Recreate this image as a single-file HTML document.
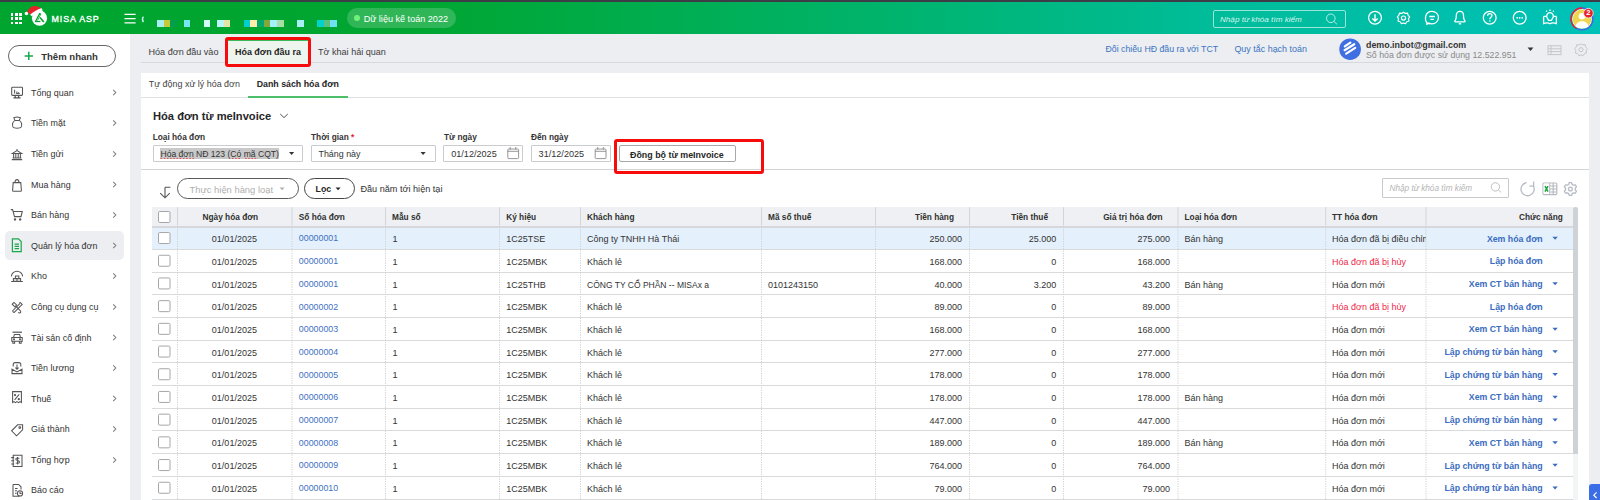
<!DOCTYPE html><html><head><meta charset="utf-8"><style>
*{box-sizing:border-box;margin:0;padding:0}
html,body{width:1600px;height:500px;overflow:hidden}
body{position:relative;background:#eceef1;font-family:"Liberation Sans",sans-serif;color:#262626;font-size:9px}
.a{position:absolute}
.t{position:absolute;white-space:nowrap;line-height:9px;height:9px}
.b{font-weight:bold}
svg{position:absolute;overflow:visible}
#hdr{left:0;top:2px;width:1600px;height:32px;background:linear-gradient(90deg,#00a52f 0px,#00a631 420px,#00b46e 900px,#00bc98 1200px,#00c1b8 1600px)}
#side{left:0;top:34px;width:130px;height:466px;background:#fff}
#panel{left:141px;top:73px;width:1448px;height:427px;background:#fff}
.hl{stroke:#fff;fill:none;stroke-width:1.3}
.si{stroke:#555;fill:none;stroke-width:1.05}
</style></head><body>
<div class="a" style="left:0;top:0;width:1600px;height:2px;background:#3e3c47"></div>
<div id="hdr" class="a"></div>
<div class="a" style="left:11.20px;top:13.30px;width:2.3px;height:2.4px;background:#fff"></div>
<div class="a" style="left:15.30px;top:13.30px;width:2.3px;height:2.4px;background:#fff"></div>
<div class="a" style="left:19.40px;top:13.30px;width:2.3px;height:2.4px;background:#fff"></div>
<div class="a" style="left:11.20px;top:17.40px;width:2.3px;height:2.4px;background:#fff"></div>
<div class="a" style="left:15.30px;top:17.40px;width:2.3px;height:2.4px;background:#fff"></div>
<div class="a" style="left:19.40px;top:17.40px;width:2.3px;height:2.4px;background:#fff"></div>
<div class="a" style="left:11.20px;top:21.50px;width:2.3px;height:2.4px;background:#fff"></div>
<div class="a" style="left:15.30px;top:21.50px;width:2.3px;height:2.4px;background:#fff"></div>
<div class="a" style="left:19.40px;top:21.50px;width:2.3px;height:2.4px;background:#fff"></div>
<svg style="left:0;top:0" width="110" height="34">
<circle cx="39.5" cy="18.2" r="7.6" fill="#fff"/>
<g stroke="#00a52f" fill="none" stroke-linecap="butt">
<path d="M35.4 21.8 L39.6 13.6 L41 14.4" stroke-width="1.3"/>
<path d="M35.2 21.5 H40.4" stroke-width="1.3"/>
<path d="M37.6 20.4 L40.6 14.6" stroke-width="0.8"/>
<path d="M40 17.4 L43.8 21.9" stroke-width="1.6"/>
</g>
<path d="M26.8 12.4 C28.5 8.2 31.5 6 34.4 5.9 C37.4 5.8 39.8 7 41.4 8.6 L31 15 C30 13.2 28.6 12.4 26.8 12.4Z" fill="#e8232a"/>
<path d="M30.2 14.4 C33.6 11.6 37.6 9.2 41.2 8.2 C42 8.6 42.6 9.4 42.6 10.4 C38.8 11.6 35 13.6 31.8 16.2 C31.2 15.8 30.6 15.2 30.2 14.4Z" fill="#fff"/>
<circle cx="26.4" cy="13.6" r="1.75" fill="#fff"/>
</svg>
<div class="t" style="left:51.6px;top:14.6px;color:#fff;font-size:8.9px;line-height:9px;letter-spacing:0.88px;-webkit-text-stroke:0.35px #fff">MISA ASP</div>
<svg style="left:0;top:0" width="150" height="34"><path d="M124.5 14.4H135.6M124.5 18.7H135.6M124.5 22.9H135.6" stroke="#fff" stroke-width="1.2"/><path d="M143.4 16.6 Q141.4 19.4 143.4 22.2" stroke="#c8f4f0" stroke-width="1.3" fill="none"/></svg>
<div class="a" style="left:157.00px;top:20px;width:6.67px;height:6.67px;background:#a8eef0"></div><div class="a" style="left:163.67px;top:20px;width:6.67px;height:6.67px;background:#c6ca3a"></div><div class="a" style="left:170.33px;top:20px;width:6.67px;height:6.67px;background:#00a04a"></div><div class="a" style="left:183.67px;top:20px;width:6.67px;height:6.67px;background:#76e6f0"></div><div class="a" style="left:203.67px;top:20px;width:6.67px;height:6.67px;background:#d2fcf6"></div><div class="a" style="left:217.00px;top:20px;width:6.67px;height:6.67px;background:#b8f6f8"></div><div class="a" style="left:223.67px;top:20px;width:6.67px;height:6.67px;background:#e6e4a4"></div><div class="a" style="left:243.67px;top:20px;width:6.67px;height:6.67px;background:#00cfcf"></div><div class="a" style="left:250.33px;top:20px;width:6.67px;height:6.67px;background:#ffeca8"></div><div class="a" style="left:257.00px;top:20px;width:6.67px;height:6.67px;background:#00a86e"></div><div class="a" style="left:263.67px;top:20px;width:6.67px;height:6.67px;background:#80a83a"></div><div class="a" style="left:270.33px;top:20px;width:6.67px;height:6.67px;background:#a6f0fc"></div><div class="a" style="left:277.00px;top:20px;width:6.67px;height:6.67px;background:#a8dea8"></div><div class="a" style="left:297.00px;top:20px;width:6.67px;height:6.67px;background:#a6f0f6"></div><div class="a" style="left:317.00px;top:20px;width:6.67px;height:6.67px;background:#00d2cc"></div><div class="a" style="left:323.67px;top:20px;width:6.67px;height:6.67px;background:#5cc07c"></div><div class="a" style="left:330.33px;top:20px;width:6.67px;height:6.67px;background:#6ee2f0"></div>
<div class="a" style="left:346.8px;top:8.1px;width:108.8px;height:20.3px;border-radius:10.2px;background:rgba(255,255,255,0.19)"></div>
<div class="a" style="left:353.8px;top:15.3px;width:6px;height:6px;border-radius:50%;background:#72f07a"></div>
<div class="t" style="left:363.7px;top:14.6px;color:#fff;font-size:9.08px">Dữ liệu kế toán 2022</div>
<div class="a" style="left:1212.5px;top:10.1px;width:133px;height:17.5px;border:1px solid rgba(255,255,255,0.6);border-radius:2px"></div>
<div class="t" style="left:1220px;top:14.5px;color:rgba(255,255,255,0.85);font-size:8.12px;font-style:italic">Nhập từ khóa tìm kiếm</div>
<svg style="left:0;top:0" width="1600" height="34"><circle cx="1330.8" cy="18.3" r="4.3" stroke="rgba(255,255,255,0.7)" stroke-width="1" fill="none"/><path d="M1334 21.5 L1337 24.3" stroke="rgba(255,255,255,0.7)" stroke-width="1"/></svg>
<svg style="left:0;top:0" width="1600" height="34">
<g class="hl">
<circle cx="1375" cy="17.8" r="6.4"/>
<path d="M1375 14.2V21 M1372.3 18.4L1375 21L1377.7 18.4" stroke-width="1.4"/>
<g transform="translate(1403.5 18.1) scale(0.9) translate(-1403.5 -17.8)"><path d="M1403.5 11.4 L1405.5 12.6 L1408 12.2 L1408.6 14.6 L1410.3 16.4 L1409 18.6 L1409.6 21 L1407.2 21.8 L1405.8 24 L1403.5 23.2 L1401.2 24 L1399.8 21.8 L1397.4 21 L1398 18.6 L1396.7 16.4 L1398.4 14.6 L1399 12.2 L1401.5 12.6Z" stroke-linejoin="round"/>
<circle cx="1403.5" cy="17.8" r="2.3"/></g>
<path d="M1428.2 23.8 C1425 22.6 1425.4 17.8 1425.6 16.8 C1426.4 12.6 1429.6 11.4 1432 11.4 C1435.6 11.4 1438.5 14 1438.5 17.6 C1438.5 21.4 1435.3 23.8 1432 23.8 C1430.8 23.8 1429.6 23.6 1428.6 23.1 L1426.2 24.4 Z"/>
<path d="M1429.3 16.5H1434.9 M1430.4 19.3H1433.8"/>
<path d="M1455.2 20.4 C1456.3 19.3 1456.3 17.6 1456.3 15.4 C1456.3 12.8 1457.9 11.3 1459.9 11.3 C1461.9 11.3 1463.5 12.8 1463.5 15.4 C1463.5 17.6 1463.5 19.3 1464.6 20.4 C1465.4 21.2 1465 21.8 1464.2 21.8 H1455.6 C1454.8 21.8 1454.4 21.2 1455.2 20.4Z M1458.8 23.4 Q1459.9 24.4 1461 23.4"/>
<circle cx="1489.7" cy="17.8" r="6.4"/>
<path d="M1487.6 15.8 C1487.6 14.4 1488.6 13.6 1489.8 13.6 C1491.1 13.6 1492 14.5 1492 15.6 C1492 17.2 1489.8 17.4 1489.8 19.2" />
<circle cx="1519.7" cy="17.8" r="6.4"/>
<path d="M1543.6 16.4 V23.6 C1546.4 22.6 1548.2 22.6 1550 23.8 C1551.8 22.6 1553.6 22.6 1556.4 23.6 V16.4 M1543.6 16.4H1546.2 M1553.8 16.4H1556.4"/>
<path d="M1547.6 18.6 C1546.4 17.2 1546.4 14.6 1547.8 13.6 C1549 12.6 1551 12.6 1552.2 13.6 C1553.6 14.6 1553.6 17.2 1552.4 18.6 L1551.4 20.4 H1548.6Z"/>
<path d="M1550 9.6V11 M1546.2 10.8L1547 11.6 M1553.8 10.8L1553 11.6"/>
</g>
<circle cx="1489.9" cy="21" r="0.8" fill="#fff"/>
<circle cx="1517.2" cy="17.8" r="0.9" fill="#fff"/><circle cx="1519.7" cy="17.8" r="0.9" fill="#fff"/><circle cx="1522.2" cy="17.8" r="0.9" fill="#fff"/>
</svg>
<svg style="left:0;top:0" width="1600" height="34">
<circle cx="1582" cy="18.9" r="10.9" fill="none" stroke="#4a5cf0" stroke-width="1.3"/>
<circle cx="1582" cy="18.9" r="10.9" fill="none" stroke="#e8202a" stroke-width="1.4" stroke-dasharray="0 22.8 28.5 100"/>
<circle cx="1582" cy="18.9" r="9.9" fill="#fff"/>
<circle cx="1582" cy="18.9" r="9.3" fill="#f0d64c"/>
<circle cx="1582" cy="16.3" r="3.3" fill="#fff"/>
<path d="M1575.6 26.6 C1576.2 22.6 1578.8 21.2 1582 21.2 C1585.2 21.2 1587.8 22.6 1588.4 26.6 C1586.4 28.6 1577.6 28.6 1575.6 26.6Z" fill="#fff"/>
<circle cx="1588.4" cy="13.2" r="4.8" fill="#e8202a" stroke="#fff" stroke-width="0.7"/>
</svg>
<div class="t b" style="left:1586.3px;top:9.4px;color:#fff;font-size:7.6px;line-height:8px">2</div>
<div id="side" class="a"></div>
<div class="a" style="left:8.4px;top:45px;width:107.5px;height:22px;border:1px solid #666;border-radius:11px"></div>
<svg style="left:0;top:0" width="130" height="80"><path d="M28.8 51.7V60.1M24.6 55.9H33" stroke="#1aa84a" stroke-width="1.5"/></svg>
<div class="t b" style="left:41.2px;top:51.6px;font-size:9.55px;color:#333">Thêm nhanh</div>
<div class="a" style="left:5px;top:231px;width:119px;height:28.5px;border-radius:5px;background:#eceef1"></div>
<div class="t" style="left:31px;top:88.9px;font-size:8.94px;color:#333">Tổng quan</div>
<svg style="left:0;top:0" width="130" height="500"><path d="M113.2 89.9L115.8 92.5L113.2 95.1" stroke="#7a7a7a" stroke-width="1.05" fill="none"/></svg>
<div class="t" style="left:31px;top:119.4px;font-size:8.94px;color:#333">Tiền mặt</div>
<svg style="left:0;top:0" width="130" height="500"><path d="M113.2 120.4L115.8 123.0L113.2 125.6" stroke="#7a7a7a" stroke-width="1.05" fill="none"/></svg>
<div class="t" style="left:31px;top:150.4px;font-size:8.94px;color:#333">Tiền gửi</div>
<svg style="left:0;top:0" width="130" height="500"><path d="M113.2 151.4L115.8 154.0L113.2 156.6" stroke="#7a7a7a" stroke-width="1.05" fill="none"/></svg>
<div class="t" style="left:31px;top:180.9px;font-size:8.94px;color:#333">Mua hàng</div>
<svg style="left:0;top:0" width="130" height="500"><path d="M113.2 181.9L115.8 184.5L113.2 187.1" stroke="#7a7a7a" stroke-width="1.05" fill="none"/></svg>
<div class="t" style="left:31px;top:211.4px;font-size:8.94px;color:#333">Bán hàng</div>
<svg style="left:0;top:0" width="130" height="500"><path d="M113.2 212.4L115.8 215.0L113.2 217.6" stroke="#7a7a7a" stroke-width="1.05" fill="none"/></svg>
<div class="t" style="left:31px;top:241.9px;font-size:8.94px;color:#333">Quản lý hóa đơn</div>
<svg style="left:0;top:0" width="130" height="500"><path d="M113.2 242.9L115.8 245.5L113.2 248.1" stroke="#7a7a7a" stroke-width="1.05" fill="none"/></svg>
<div class="t" style="left:31px;top:272.4px;font-size:8.94px;color:#333">Kho</div>
<svg style="left:0;top:0" width="130" height="500"><path d="M113.2 273.4L115.8 276.0L113.2 278.6" stroke="#7a7a7a" stroke-width="1.05" fill="none"/></svg>
<div class="t" style="left:31px;top:303.4px;font-size:8.94px;color:#333">Công cụ dụng cụ</div>
<svg style="left:0;top:0" width="130" height="500"><path d="M113.2 304.4L115.8 307.0L113.2 309.6" stroke="#7a7a7a" stroke-width="1.05" fill="none"/></svg>
<div class="t" style="left:31px;top:333.9px;font-size:8.94px;color:#333">Tài sản cố định</div>
<svg style="left:0;top:0" width="130" height="500"><path d="M113.2 334.9L115.8 337.5L113.2 340.1" stroke="#7a7a7a" stroke-width="1.05" fill="none"/></svg>
<div class="t" style="left:31px;top:364.4px;font-size:8.94px;color:#333">Tiền lương</div>
<svg style="left:0;top:0" width="130" height="500"><path d="M113.2 365.4L115.8 368.0L113.2 370.6" stroke="#7a7a7a" stroke-width="1.05" fill="none"/></svg>
<div class="t" style="left:31px;top:394.9px;font-size:8.94px;color:#333">Thuế</div>
<svg style="left:0;top:0" width="130" height="500"><path d="M113.2 395.9L115.8 398.5L113.2 401.1" stroke="#7a7a7a" stroke-width="1.05" fill="none"/></svg>
<div class="t" style="left:31px;top:425.4px;font-size:8.94px;color:#333">Giá thành</div>
<svg style="left:0;top:0" width="130" height="500"><path d="M113.2 426.4L115.8 429.0L113.2 431.6" stroke="#7a7a7a" stroke-width="1.05" fill="none"/></svg>
<div class="t" style="left:31px;top:456.4px;font-size:8.94px;color:#333">Tổng hợp</div>
<svg style="left:0;top:0" width="130" height="500"><path d="M113.2 457.4L115.8 460.0L113.2 462.6" stroke="#7a7a7a" stroke-width="1.05" fill="none"/></svg>
<div class="t" style="left:31px;top:486.4px;font-size:8.94px;color:#333">Báo cáo</div>
<svg style="left:0;top:0" width="130" height="500"><g class="si">
<rect x="11.7" y="87.2" width="10.8" height="8.2" rx="0.8"/>
<path d="M14.6 89.8V93.4 M16.8 91.6V93.4 M18.6 92.2V93.4 M16.2 93.4H19.6"/>
<path d="M15.2 95.4V97.6 M18.6 95.4V97.6 M13.4 97.9H20.6" stroke-width="1.3"/>
<path d="M13.8 117.8 C15.5 117 18.5 117 20.4 117.8 L19.2 120.4 C21.8 121.8 22.2 125 21.2 127 C20.2 128.6 14 128.6 13 127 C12 125 12.4 121.8 15 120.4Z M15 120.4H19.2"/>
<path d="M11.8 159.6H22.2 M12.6 158H21.4 M13.6 158V153.6 M15.8 158V153.6 M18.2 158V153.6 M20.4 158V153.6 M12.4 153.4H21.6 L17 150.6Z M17 149V150.4"/>
<path d="M12.6 190.4 L13.2 182.6 H20.8 L21.4 190.4 C21.4 191 21 191.2 20.6 191.2 H13.4 C13 191.2 12.6 191 12.6 190.4Z M15 182.6 C15 178.6 19 178.6 19 182.6"/>
<path d="M10.8 209.6 H12.6 L14.5 216.6 H21 L22.3 211.4 H13.5"/>
<circle cx="15" cy="219.4" r="0.7"/><circle cx="20.2" cy="219.4" r="0.7"/>
</g>
<g stroke="#1aa84a" fill="none" stroke-width="1.2">
<path d="M12.4 238.8 H18.4 L21.2 241.6 V251.6 H12.4Z M14.6 244.2 H19 M14.6 246.4 H19 M14.6 248.6 H19"/>
</g>
<g class="si">
<path d="M11.4 276.4 C11.6 273.4 14.2 271.2 17 271.2 C19.8 271.2 22.4 273.4 22.6 276.4"/>
<path d="M15.4 276 H18.8 V278.6 H15.4Z M13.4 278.6 H17 V281.2 H13.4Z M17 278.6 H20.6 V281.2 H17Z M11.2 281.5 H22.8" />
<path d="M12.4 311 L19.6 303.8 M14 312.6 L21.2 305.4 M12.4 311 L14 312.6 M19.2 303.4 L20.2 302.4 L22.2 304.4 L21.2 305.4"/>
<path d="M12.2 304.2 L14 302.4 L16.6 305 L14.8 306.8Z M15.6 306 L20 310.4 C21 311.4 21 312.4 20.2 312.8 C19.4 313.2 18.6 312.8 18.2 312.2"/>
<path d="M12.5 332.2 H22" stroke-width="1.2"/>
<path d="M13.6 337.4 L14.4 334.4 H19.6 L20.4 337.4 M11.8 337.4 H22.2 V341.2 H11.8Z M12.8 341.2 V343.2 H14.6 V341.2 M19.4 341.2 V343.2 H21.2 V341.2"/>
<circle cx="14" cy="339.3" r="0.5"/><circle cx="20" cy="339.3" r="0.5"/>
<path d="M13.2 366.6 V364.6 C13.2 363.4 14 362.6 15.2 362.6 H18.8 C20 362.6 20.8 363.4 20.8 364.6 V366.6 M17 364.6 V369.2 M15.4 367.6 L17 369.2 L18.6 367.6"/>
<path d="M12 369.2 V373.6 H22 V369.2 L17 372 Z"/>
<path d="M12.6 391.6 H21.4 V402.6 L20 401.6 L18.6 402.6 L17 401.6 L15.4 402.6 L14 401.6 L12.6 402.6Z M14.6 399.8 L19.2 394.4"/>
<circle cx="15" cy="395" r="0.6"/><circle cx="18.8" cy="399.2" r="0.6"/>
<path d="M17.6 424.8 L22.6 424.8 L22.6 429.8 L16.6 435.8 L11.6 430.8 Z"/>
<circle cx="19.8" cy="427.6" r="0.9"/>
<path d="M13.2 455.2 H22 V466.4 H13.2Z M11.2 457.6 H14.2 M11.2 460.8 H14.2 M11.2 464 H14.2 M17.6 457 V464.6 M19.4 458.4 C18.8 457.7 15.8 457.6 15.8 459.2 C15.8 460.9 19.5 460.1 19.5 462 C19.5 463.6 16.2 463.4 15.8 462.7"/>
<path d="M13 484.4 H18.6 L21 486.8 V489.4 M19.4 496.2 H13 V484.4 M15 488.4 H17.6 M15 490.8 H17 M15 493.2 H16.6"/>
<circle cx="20" cy="493.4" r="2.6"/>
<path d="M20 491.6 V493.4 H21.6"/>
</g></svg>
<div class="a" style="left:141px;top:62px;width:1459px;height:1px;background:#d6d8db"></div>
<div class="a" style="left:225px;top:36.8px;width:86.4px;height:30.4px;border:3.4px solid #f70c0c;border-radius:3px;background:#eef5ee"></div><div class="a" style="left:228.4px;top:40.2px;width:79.6px;height:1px;background:#3cb85a"></div>
<div class="t" style="left:148.5px;top:47.6px;color:#3c3c3c;font-size:9.07px">Hóa đơn đầu vào</div>
<div class="t b" style="left:235px;top:47.6px;color:#1f1f1f;font-size:8.95px">Hóa đơn đầu ra</div>
<div class="t" style="left:318px;top:47.6px;color:#3c3c3c;font-size:9.07px">Tờ khai hải quan</div>
<div class="t" style="left:1105.5px;top:45.3px;color:#3a74c2;font-size:8.75px">Đối chiếu HĐ đầu ra với TCT</div>
<div class="t" style="left:1234.4px;top:45.3px;color:#3a74c2;font-size:8.95px">Quy tắc hạch toán</div>
<svg style="left:0;top:0" width="1600" height="80">
<circle cx="1350.1" cy="49.2" r="10.8" fill="#3f6fe0"/>
<path d="M1344.8 46.4 L1350.4 42.6 M1344.6 50.2 L1354.2 44.2 M1346.2 53.6 L1355.2 47.8" stroke="#fff" stroke-width="2.2" stroke-linecap="round"/>
<path d="M1527.6 47.6 H1533.4 L1530.5 51Z" fill="#333"/>
<g stroke="#c4c6ca" fill="none" stroke-width="1">
<rect x="1548" y="45.8" width="13" height="8.8"/>
<path d="M1548 48.8H1561 M1548 51.6H1561 M1551 45.8V54.6"/>
<g transform="translate(0,1.4)"><path d="M1581 42.4 L1582.9 43.6 L1585.2 43.2 L1585.7 45.5 L1587.3 47.2 L1586.1 49.2 L1586.7 51.5 L1584.4 52.2 L1583.1 54.3 L1581 53.5 L1578.9 54.3 L1577.6 52.2 L1575.3 51.5 L1575.9 49.2 L1574.7 47.2 L1576.3 45.5 L1576.8 43.2 L1579.1 43.6Z"/>
<circle cx="1581" cy="48.3" r="2.1"/>
</g></g></svg>
<div class="t b" style="left:1366px;top:40.6px;color:#333;font-size:8.87px">demo.inbot@gmail.com</div>
<div class="t" style="left:1366px;top:50.7px;color:#8a8a8a;font-size:8.8px">Số hóa đơn được sử dụng 12.522.951</div>
<div id="panel" class="a"></div>
<div class="a" style="left:141px;top:96.5px;width:1448px;height:1px;background:#e0e2e5"></div>
<div class="a" style="left:248px;top:95.6px;width:99.5px;height:2px;background:#4cbf6a"></div>
<div class="t" style="left:148.7px;top:80.3px;color:#444;font-size:8.93px">Tự động xử lý hóa đơn</div>
<div class="t b" style="left:256.7px;top:80.3px;color:#262626;font-size:8.82px">Danh sách hóa đơn</div>
<div class="t b" style="left:153px;top:111.3px;color:#262626;font-size:11.15px;line-height:11px;height:11px">Hóa đơn từ meInvoice</div>
<svg style="left:0;top:0" width="400" height="140"><path d="M280.2 114 L284 117.6 L287.8 114" stroke="#555" stroke-width="1" fill="none"/></svg>
<div class="t b" style="left:152.7px;top:132.6px;color:#333;font-size:8.3px">Loại hóa đơn</div>
<div class="t b" style="left:311px;top:132.6px;color:#333;font-size:8.3px">Thời gian <span style="color:#e8202a">*</span></div>
<div class="t b" style="left:444px;top:132.6px;color:#333;font-size:8.3px">Từ ngày</div>
<div class="t b" style="left:531px;top:132.6px;color:#333;font-size:8.3px">Đến ngày</div>
<div class="a" style="left:152.5px;top:145.2px;width:150px;height:16.8px;border:1px solid #c9cbcf;border-radius:1px;background:#fff;"></div>
<div class="a" style="left:311px;top:145.2px;width:124.8px;height:16.8px;border:1px solid #c9cbcf;border-radius:1px;background:#fff;"></div>
<div class="a" style="left:443.3px;top:145.2px;width:79.7px;height:16.8px;border:1px solid #c9cbcf;border-radius:1px;background:#fff;"></div>
<div class="a" style="left:531px;top:145.2px;width:79.8px;height:16.8px;border:1px solid #c9cbcf;border-radius:1px;background:#fff;"></div>
<div class="a" style="left:160px;top:147.5px;width:119px;height:11.5px;background:#c9c9c9"></div>
<div class="t" style="left:160.5px;top:149.6px;color:#333;font-size:8.57px">Hóa đơn NĐ 123 (Có mã CQT)</div>
<div class="t" style="left:318.5px;top:149.8px;color:#333;font-size:8.89px">Tháng này</div>
<div class="t" style="left:451.2px;top:149.8px;color:#333;font-size:9.1px">01/12/2025</div>
<div class="t" style="left:538.6px;top:149.8px;color:#333;font-size:9.1px">31/12/2025</div>
<svg style="left:0;top:0" width="800" height="200"><path d="M289 152H294.2L291.6 155Z" fill="#333"/><path d="M420.5 152H425.7L423.1 155Z" fill="#333"/><path d="M160.5 158.4 H195.5 M232 158.4 H240.5 M245 158.4 H258" stroke="#e64040" stroke-width="0.9" stroke-dasharray="1.6 1.6"/></svg>
<svg style="left:0;top:0" width="800" height="200"><g stroke="#8a8a8a" fill="none" stroke-width="0.9">
<rect x="507.8" y="149" width="10.8" height="9.6" rx="1"/><path d="M507.5 151.3H518.5 M510.2 147V149.6 M515.8 147V149.6"/>
<rect x="595.2" y="149" width="10.8" height="9.6" rx="1"/><path d="M595 151.3H606 M597.7 147V149.6 M603.3 147V149.6"/>
</g></svg>
<div class="a" style="left:618.8px;top:145.2px;width:116.8px;height:17px;border:1px solid #a6a8ab;border-radius:2px;background:#fff"></div>
<div class="t b" style="left:630px;top:151px;color:#262626;font-size:8.9px">Đồng bộ từ meInvoice</div>
<div class="a" style="left:141px;top:168.6px;width:1448px;height:1px;background:#d2d4d7"></div>
<div class="a" style="left:614.3px;top:139.4px;width:149.7px;height:34.3px;border:3.6px solid #f70c0c;border-radius:3px"></div>
<svg style="left:0;top:0" width="800" height="210"><g stroke="#555" fill="none" stroke-width="1.1">
<path d="M165 187.3 V197.6 M160.2 193.2 L165 197.8 L169.8 193.2 M165 187.3 H170.4"/>
</g></svg>
<div class="a" style="left:177.4px;top:178.4px;width:121.6px;height:20.3px;border:1px solid #5a5a5a;border-radius:10.5px"></div>
<div class="t" style="left:189.6px;top:184.5px;color:#b0b0b0;font-size:9.4px">Thực hiện hàng loạt</div>
<svg style="left:0;top:0" width="800" height="210"><path d="M279.6 187.4H284.6L282.1 190.2Z" fill="#b0b0b0"/><path d="M335.6 187.4H340.6L338.1 190.2Z" fill="#262626"/></svg>
<div class="a" style="left:304px;top:178.4px;width:50.6px;height:20.3px;border:1px solid #444;border-radius:10.5px"></div>
<div class="t b" style="left:315.6px;top:185px;color:#262626;font-size:8.8px">Lọc</div>
<div class="t" style="left:360.4px;top:185px;color:#333;font-size:9.15px">Đầu năm tới hiện tại</div>
<div class="a" style="left:1382.2px;top:178.3px;width:126.4px;height:20.2px;border:1px solid #c8cacd;border-radius:1px"></div>
<div class="t" style="left:1389.6px;top:184.2px;color:#b4b4b4;font-size:8.2px;font-style:italic">Nhập từ khóa tìm kiếm</div>
<svg style="left:0;top:0" width="1600" height="210"><g stroke="#b8b8b8" fill="none" stroke-width="0.9">
<circle cx="1495.4" cy="186.9" r="4.2"/><path d="M1498.4 189.9 L1501 192.4"/>
</g>
<g stroke="#b6bac2" fill="none" stroke-width="1.3">
<path d="M1526.6 182.6 A6.6 6.6 0 1 0 1533.4 186"/>
<path d="M1533.6 181.6 V186.2 H1529.4"/>
<path d="M1569.18 182.72 L1571.62 182.72 L1572.16 184.43 L1573.48 185.19 L1575.23 184.80 L1576.45 186.92 L1575.24 188.23 L1575.24 189.77 L1576.45 191.08 L1575.23 193.20 L1573.48 192.81 L1572.16 193.57 L1571.62 195.28 L1569.18 195.28 L1568.64 193.57 L1567.32 192.81 L1565.57 193.20 L1564.35 191.08 L1565.56 189.77 L1565.56 188.23 L1564.35 186.92 L1565.57 184.80 L1567.32 185.19 L1568.64 184.43 Z" stroke-linejoin="round"/>
<circle cx="1570.4" cy="189" r="1.9"/>
</g>
<g fill="none" stroke="#b6bac2" stroke-width="1.2">
<rect x="1543" y="183" width="13.8" height="11.6" rx="1"/>
<path d="M1549.6 186 H1556.8 M1549.6 189 H1556.8 M1549.6 192 H1556.8 M1553.2 183 V194.6 M1549.6 183 V194.6"/>
</g>
<rect x="1543.6" y="183.6" width="5.6" height="10.4" fill="#fff"/>
<path d="M1545 186.2 L1548 191.6 M1548 186.2 L1545 191.6" stroke="#18a83a" stroke-width="1.5"/>
</svg>
<div class="a" style="left:152px;top:207.2px;width:1421.2px;height:19.400000000000006px;background:#eef0f3"></div>
<div class="a" style="left:152px;top:225.6px;width:1421.2px;height:2px;background:#d6d8dc"></div>
<div class="a" style="left:152px;top:227.6px;width:1421.2px;height:21.4px;background:#e4f0fc"></div>
<div class="a" style="left:152px;top:249px;width:1421.2px;height:1px;background:#d9dadc"></div>
<div class="a" style="left:152px;top:272px;width:1421.2px;height:1px;background:#d9dadc"></div>
<div class="a" style="left:152px;top:294px;width:1421.2px;height:1px;background:#d9dadc"></div>
<div class="a" style="left:152px;top:317px;width:1421.2px;height:1px;background:#d9dadc"></div>
<div class="a" style="left:152px;top:340px;width:1421.2px;height:1px;background:#d9dadc"></div>
<div class="a" style="left:152px;top:362px;width:1421.2px;height:1px;background:#d9dadc"></div>
<div class="a" style="left:152px;top:385px;width:1421.2px;height:1px;background:#d9dadc"></div>
<div class="a" style="left:152px;top:408px;width:1421.2px;height:1px;background:#d9dadc"></div>
<div class="a" style="left:152px;top:430px;width:1421.2px;height:1px;background:#d9dadc"></div>
<div class="a" style="left:152px;top:453px;width:1421.2px;height:1px;background:#d9dadc"></div>
<div class="a" style="left:152px;top:476px;width:1421.2px;height:1px;background:#d9dadc"></div>
<div class="a" style="left:152px;top:499px;width:1421.2px;height:1px;background:#d9dadc"></div>
<svg style="left:0;top:0" width="1600" height="500"><path d="M177.5 207.2V225.6" stroke="#d2d4d8" stroke-width="1"/><path d="M292 207.2V225.6" stroke="#d2d4d8" stroke-width="1"/><path d="M385.5 207.2V225.6" stroke="#d2d4d8" stroke-width="1"/><path d="M499.5 207.2V225.6" stroke="#d2d4d8" stroke-width="1"/><path d="M580.5 207.2V225.6" stroke="#d2d4d8" stroke-width="1"/><path d="M761.5 207.2V225.6" stroke="#d2d4d8" stroke-width="1"/><path d="M875.5 207.2V225.6" stroke="#d2d4d8" stroke-width="1"/><path d="M969.5 207.2V225.6" stroke="#d2d4d8" stroke-width="1"/><path d="M1063.5 207.2V225.6" stroke="#d2d4d8" stroke-width="1"/><path d="M1178 207.2V225.6" stroke="#d2d4d8" stroke-width="1"/><path d="M1325.7 207.2V225.6" stroke="#d2d4d8" stroke-width="1"/><path d="M1426 207.2V225.6" stroke="#d2d4d8" stroke-width="1"/><path d="M177.5 226.6V500" stroke="#d0d0d0" stroke-width="1" stroke-dasharray="1.2 1.2"/><path d="M292 226.6V500" stroke="#d0d0d0" stroke-width="1" stroke-dasharray="1.2 1.2"/><path d="M385.5 226.6V500" stroke="#d0d0d0" stroke-width="1" stroke-dasharray="1.2 1.2"/><path d="M499.5 226.6V500" stroke="#d0d0d0" stroke-width="1" stroke-dasharray="1.2 1.2"/><path d="M580.5 226.6V500" stroke="#d0d0d0" stroke-width="1" stroke-dasharray="1.2 1.2"/><path d="M761.5 226.6V500" stroke="#d0d0d0" stroke-width="1" stroke-dasharray="1.2 1.2"/><path d="M875.5 226.6V500" stroke="#d0d0d0" stroke-width="1" stroke-dasharray="1.2 1.2"/><path d="M969.5 226.6V500" stroke="#d0d0d0" stroke-width="1" stroke-dasharray="1.2 1.2"/><path d="M1063.5 226.6V500" stroke="#d0d0d0" stroke-width="1" stroke-dasharray="1.2 1.2"/><path d="M1178 226.6V500" stroke="#d0d0d0" stroke-width="1" stroke-dasharray="1.2 1.2"/><path d="M1325.7 226.6V500" stroke="#d0d0d0" stroke-width="1" stroke-dasharray="1.2 1.2"/><path d="M1426 226.6V500" stroke="#d0d0d0" stroke-width="1" stroke-dasharray="1.2 1.2"/><rect x="158.5" y="211.50" width="11.5" height="11" rx="1.2" fill="#fff" stroke="#a4a6a8" stroke-width="1"/><rect x="158.5" y="232.55" width="11.5" height="11" rx="1.2" fill="#fff" stroke="#a4a6a8" stroke-width="1"/><rect x="158.5" y="255.25" width="11.5" height="11" rx="1.2" fill="#fff" stroke="#a4a6a8" stroke-width="1"/><rect x="158.5" y="277.95" width="11.5" height="11" rx="1.2" fill="#fff" stroke="#a4a6a8" stroke-width="1"/><rect x="158.5" y="300.65" width="11.5" height="11" rx="1.2" fill="#fff" stroke="#a4a6a8" stroke-width="1"/><rect x="158.5" y="323.35" width="11.5" height="11" rx="1.2" fill="#fff" stroke="#a4a6a8" stroke-width="1"/><rect x="158.5" y="346.05" width="11.5" height="11" rx="1.2" fill="#fff" stroke="#a4a6a8" stroke-width="1"/><rect x="158.5" y="368.75" width="11.5" height="11" rx="1.2" fill="#fff" stroke="#a4a6a8" stroke-width="1"/><rect x="158.5" y="391.45" width="11.5" height="11" rx="1.2" fill="#fff" stroke="#a4a6a8" stroke-width="1"/><rect x="158.5" y="414.15" width="11.5" height="11" rx="1.2" fill="#fff" stroke="#a4a6a8" stroke-width="1"/><rect x="158.5" y="436.85" width="11.5" height="11" rx="1.2" fill="#fff" stroke="#a4a6a8" stroke-width="1"/><rect x="158.5" y="459.55" width="11.5" height="11" rx="1.2" fill="#fff" stroke="#a4a6a8" stroke-width="1"/><rect x="158.5" y="482.25" width="11.5" height="11" rx="1.2" fill="#fff" stroke="#a4a6a8" stroke-width="1"/></svg>
<div class="t" style="left:202.5px;top:212.60px;font-weight:bold;font-size:8.3px;color:#303030">Ngày hóa đơn</div>
<div class="t" style="left:298.8px;top:212.60px;font-weight:bold;font-size:8.3px;color:#303030">Số hóa đơn</div>
<div class="t" style="left:392.0px;top:212.60px;font-weight:bold;font-size:8.3px;color:#303030">Mẫu số</div>
<div class="t" style="left:506.2px;top:212.60px;font-weight:bold;font-size:8.3px;color:#303030">Ký hiệu</div>
<div class="t" style="left:587.0px;top:212.60px;font-weight:bold;font-size:8.3px;color:#303030">Khách hàng</div>
<div class="t" style="left:768.0px;top:212.60px;font-weight:bold;font-size:8.3px;color:#303030">Mã số thuế</div>
<div class="t" style="right:646.0px;top:212.60px;font-weight:bold;font-size:8.3px;color:#303030">Tiền hàng</div>
<div class="t" style="right:552.0px;top:212.60px;font-weight:bold;font-size:8.3px;color:#303030">Tiền thuế</div>
<div class="t" style="right:437.5px;top:212.60px;font-weight:bold;font-size:8.3px;color:#303030">Giá trị hóa đơn</div>
<div class="t" style="left:1184.5px;top:212.60px;font-weight:bold;font-size:8.3px;color:#303030">Loại hóa đơn</div>
<div class="t" style="left:1332.0px;top:212.60px;font-weight:bold;font-size:8.3px;color:#303030">TT hóa đơn</div>
<div class="t" style="right:37.2px;top:212.60px;font-weight:bold;font-size:8.3px;color:#303030">Chức năng</div>
<div class="t" style="left:134.4px;width:200px;text-align:center;top:235.15px;font-size:9px;color:#333">01/01/2025</div>
<div class="t" style="left:298.8px;top:234.45px;font-size:8.85px;color:#3f72c2">00000001</div>
<div class="t" style="left:392.5px;top:235.15px;font-size:9px;color:#333">1</div>
<div class="t" style="left:506.2px;top:235.15px;font-size:9px;color:#333">1C25TSE</div>
<div class="t" style="left:587.0px;top:235.15px;font-size:9px;color:#333">Công ty TNHH Hà Thái</div>
<div class="t" style="right:638.0px;top:235.15px;font-size:9px;color:#333">250.000</div>
<div class="t" style="right:543.7px;top:235.15px;font-size:9px;color:#333">25.000</div>
<div class="t" style="right:430.0px;top:235.15px;font-size:9px;color:#333">275.000</div>
<div class="t" style="left:1184.5px;top:235.15px;font-size:9px;color:#333">Bán hàng</div>
<div class="t" style="left:1332px;top:235.15px;width:93.5px;overflow:hidden;font-size:9px;color:#333">Hóa đơn đã bị điều chỉnh</div>
<div class="t" style="right:57.3px;top:234.55px;font-weight:bold;font-size:8.75px;color:#3a6cc0">Xem hóa đơn</div>
<div class="t" style="left:134.4px;width:200px;text-align:center;top:257.85px;font-size:9px;color:#333">01/01/2025</div>
<div class="t" style="left:298.8px;top:257.15px;font-size:8.85px;color:#3f72c2">00000001</div>
<div class="t" style="left:392.5px;top:257.85px;font-size:9px;color:#333">1</div>
<div class="t" style="left:506.2px;top:257.85px;font-size:9px;color:#333">1C25MBK</div>
<div class="t" style="left:587.0px;top:257.85px;font-size:9px;color:#333">Khách lẻ</div>
<div class="t" style="right:638.0px;top:257.85px;font-size:9px;color:#333">168.000</div>
<div class="t" style="right:543.7px;top:257.85px;font-size:9px;color:#333">0</div>
<div class="t" style="right:430.0px;top:257.85px;font-size:9px;color:#333">168.000</div>
<div class="t" style="left:1332px;top:257.85px;width:93.5px;overflow:hidden;font-size:9px;color:#f0284a">Hóa đơn đã bị hủy</div>
<div class="t" style="right:57.3px;top:257.25px;font-weight:bold;font-size:8.75px;color:#3a6cc0">Lập hóa đơn</div>
<div class="t" style="left:134.4px;width:200px;text-align:center;top:280.55px;font-size:9px;color:#333">01/01/2025</div>
<div class="t" style="left:298.8px;top:279.85px;font-size:8.85px;color:#3f72c2">00000001</div>
<div class="t" style="left:392.5px;top:280.55px;font-size:9px;color:#333">1</div>
<div class="t" style="left:506.2px;top:280.55px;font-size:9px;color:#333">1C25THB</div>
<div class="t" style="left:587.0px;top:280.55px;font-size:8.5px;color:#333">CÔNG TY CỔ PHẦN -- MISAx a</div>
<div class="t" style="left:768.0px;top:280.55px;font-size:9px;color:#333">0101243150</div>
<div class="t" style="right:638.0px;top:280.55px;font-size:9px;color:#333">40.000</div>
<div class="t" style="right:543.7px;top:280.55px;font-size:9px;color:#333">3.200</div>
<div class="t" style="right:430.0px;top:280.55px;font-size:9px;color:#333">43.200</div>
<div class="t" style="left:1184.5px;top:280.55px;font-size:9px;color:#333">Bán hàng</div>
<div class="t" style="left:1332px;top:280.55px;width:93.5px;overflow:hidden;font-size:9px;color:#333">Hóa đơn mới</div>
<div class="t" style="right:57.3px;top:279.95px;font-weight:bold;font-size:8.75px;color:#3a6cc0">Xem CT bán hàng</div>
<div class="t" style="left:134.4px;width:200px;text-align:center;top:303.25px;font-size:9px;color:#333">01/01/2025</div>
<div class="t" style="left:298.8px;top:302.55px;font-size:8.85px;color:#3f72c2">00000002</div>
<div class="t" style="left:392.5px;top:303.25px;font-size:9px;color:#333">1</div>
<div class="t" style="left:506.2px;top:303.25px;font-size:9px;color:#333">1C25MBK</div>
<div class="t" style="left:587.0px;top:303.25px;font-size:9px;color:#333">Khách lẻ</div>
<div class="t" style="right:638.0px;top:303.25px;font-size:9px;color:#333">89.000</div>
<div class="t" style="right:543.7px;top:303.25px;font-size:9px;color:#333">0</div>
<div class="t" style="right:430.0px;top:303.25px;font-size:9px;color:#333">89.000</div>
<div class="t" style="left:1332px;top:303.25px;width:93.5px;overflow:hidden;font-size:9px;color:#f0284a">Hóa đơn đã bị hủy</div>
<div class="t" style="right:57.3px;top:302.65px;font-weight:bold;font-size:8.75px;color:#3a6cc0">Lập hóa đơn</div>
<div class="t" style="left:134.4px;width:200px;text-align:center;top:325.95px;font-size:9px;color:#333">01/01/2025</div>
<div class="t" style="left:298.8px;top:325.25px;font-size:8.85px;color:#3f72c2">00000003</div>
<div class="t" style="left:392.5px;top:325.95px;font-size:9px;color:#333">1</div>
<div class="t" style="left:506.2px;top:325.95px;font-size:9px;color:#333">1C25MBK</div>
<div class="t" style="left:587.0px;top:325.95px;font-size:9px;color:#333">Khách lẻ</div>
<div class="t" style="right:638.0px;top:325.95px;font-size:9px;color:#333">168.000</div>
<div class="t" style="right:543.7px;top:325.95px;font-size:9px;color:#333">0</div>
<div class="t" style="right:430.0px;top:325.95px;font-size:9px;color:#333">168.000</div>
<div class="t" style="left:1332px;top:325.95px;width:93.5px;overflow:hidden;font-size:9px;color:#333">Hóa đơn mới</div>
<div class="t" style="right:57.3px;top:325.35px;font-weight:bold;font-size:8.75px;color:#3a6cc0">Xem CT bán hàng</div>
<div class="t" style="left:134.4px;width:200px;text-align:center;top:348.65px;font-size:9px;color:#333">01/01/2025</div>
<div class="t" style="left:298.8px;top:347.95px;font-size:8.85px;color:#3f72c2">00000004</div>
<div class="t" style="left:392.5px;top:348.65px;font-size:9px;color:#333">1</div>
<div class="t" style="left:506.2px;top:348.65px;font-size:9px;color:#333">1C25MBK</div>
<div class="t" style="left:587.0px;top:348.65px;font-size:9px;color:#333">Khách lẻ</div>
<div class="t" style="right:638.0px;top:348.65px;font-size:9px;color:#333">277.000</div>
<div class="t" style="right:543.7px;top:348.65px;font-size:9px;color:#333">0</div>
<div class="t" style="right:430.0px;top:348.65px;font-size:9px;color:#333">277.000</div>
<div class="t" style="left:1332px;top:348.65px;width:93.5px;overflow:hidden;font-size:9px;color:#333">Hóa đơn mới</div>
<div class="t" style="right:57.3px;top:348.05px;font-weight:bold;font-size:8.75px;color:#3a6cc0">Lập chứng từ bán hàng</div>
<div class="t" style="left:134.4px;width:200px;text-align:center;top:371.35px;font-size:9px;color:#333">01/01/2025</div>
<div class="t" style="left:298.8px;top:370.65px;font-size:8.85px;color:#3f72c2">00000005</div>
<div class="t" style="left:392.5px;top:371.35px;font-size:9px;color:#333">1</div>
<div class="t" style="left:506.2px;top:371.35px;font-size:9px;color:#333">1C25MBK</div>
<div class="t" style="left:587.0px;top:371.35px;font-size:9px;color:#333">Khách lẻ</div>
<div class="t" style="right:638.0px;top:371.35px;font-size:9px;color:#333">178.000</div>
<div class="t" style="right:543.7px;top:371.35px;font-size:9px;color:#333">0</div>
<div class="t" style="right:430.0px;top:371.35px;font-size:9px;color:#333">178.000</div>
<div class="t" style="left:1332px;top:371.35px;width:93.5px;overflow:hidden;font-size:9px;color:#333">Hóa đơn mới</div>
<div class="t" style="right:57.3px;top:370.75px;font-weight:bold;font-size:8.75px;color:#3a6cc0">Lập chứng từ bán hàng</div>
<div class="t" style="left:134.4px;width:200px;text-align:center;top:394.05px;font-size:9px;color:#333">01/01/2025</div>
<div class="t" style="left:298.8px;top:393.35px;font-size:8.85px;color:#3f72c2">00000006</div>
<div class="t" style="left:392.5px;top:394.05px;font-size:9px;color:#333">1</div>
<div class="t" style="left:506.2px;top:394.05px;font-size:9px;color:#333">1C25MBK</div>
<div class="t" style="left:587.0px;top:394.05px;font-size:9px;color:#333">Khách lẻ</div>
<div class="t" style="right:638.0px;top:394.05px;font-size:9px;color:#333">178.000</div>
<div class="t" style="right:543.7px;top:394.05px;font-size:9px;color:#333">0</div>
<div class="t" style="right:430.0px;top:394.05px;font-size:9px;color:#333">178.000</div>
<div class="t" style="left:1184.5px;top:394.05px;font-size:9px;color:#333">Bán hàng</div>
<div class="t" style="left:1332px;top:394.05px;width:93.5px;overflow:hidden;font-size:9px;color:#333">Hóa đơn mới</div>
<div class="t" style="right:57.3px;top:393.45px;font-weight:bold;font-size:8.75px;color:#3a6cc0">Xem CT bán hàng</div>
<div class="t" style="left:134.4px;width:200px;text-align:center;top:416.75px;font-size:9px;color:#333">01/01/2025</div>
<div class="t" style="left:298.8px;top:416.05px;font-size:8.85px;color:#3f72c2">00000007</div>
<div class="t" style="left:392.5px;top:416.75px;font-size:9px;color:#333">1</div>
<div class="t" style="left:506.2px;top:416.75px;font-size:9px;color:#333">1C25MBK</div>
<div class="t" style="left:587.0px;top:416.75px;font-size:9px;color:#333">Khách lẻ</div>
<div class="t" style="right:638.0px;top:416.75px;font-size:9px;color:#333">447.000</div>
<div class="t" style="right:543.7px;top:416.75px;font-size:9px;color:#333">0</div>
<div class="t" style="right:430.0px;top:416.75px;font-size:9px;color:#333">447.000</div>
<div class="t" style="left:1332px;top:416.75px;width:93.5px;overflow:hidden;font-size:9px;color:#333">Hóa đơn mới</div>
<div class="t" style="right:57.3px;top:416.15px;font-weight:bold;font-size:8.75px;color:#3a6cc0">Lập chứng từ bán hàng</div>
<div class="t" style="left:134.4px;width:200px;text-align:center;top:439.45px;font-size:9px;color:#333">01/01/2025</div>
<div class="t" style="left:298.8px;top:438.75px;font-size:8.85px;color:#3f72c2">00000008</div>
<div class="t" style="left:392.5px;top:439.45px;font-size:9px;color:#333">1</div>
<div class="t" style="left:506.2px;top:439.45px;font-size:9px;color:#333">1C25MBK</div>
<div class="t" style="left:587.0px;top:439.45px;font-size:9px;color:#333">Khách lẻ</div>
<div class="t" style="right:638.0px;top:439.45px;font-size:9px;color:#333">189.000</div>
<div class="t" style="right:543.7px;top:439.45px;font-size:9px;color:#333">0</div>
<div class="t" style="right:430.0px;top:439.45px;font-size:9px;color:#333">189.000</div>
<div class="t" style="left:1184.5px;top:439.45px;font-size:9px;color:#333">Bán hàng</div>
<div class="t" style="left:1332px;top:439.45px;width:93.5px;overflow:hidden;font-size:9px;color:#333">Hóa đơn mới</div>
<div class="t" style="right:57.3px;top:438.85px;font-weight:bold;font-size:8.75px;color:#3a6cc0">Xem CT bán hàng</div>
<div class="t" style="left:134.4px;width:200px;text-align:center;top:462.15px;font-size:9px;color:#333">01/01/2025</div>
<div class="t" style="left:298.8px;top:461.45px;font-size:8.85px;color:#3f72c2">00000009</div>
<div class="t" style="left:392.5px;top:462.15px;font-size:9px;color:#333">1</div>
<div class="t" style="left:506.2px;top:462.15px;font-size:9px;color:#333">1C25MBK</div>
<div class="t" style="left:587.0px;top:462.15px;font-size:9px;color:#333">Khách lẻ</div>
<div class="t" style="right:638.0px;top:462.15px;font-size:9px;color:#333">764.000</div>
<div class="t" style="right:543.7px;top:462.15px;font-size:9px;color:#333">0</div>
<div class="t" style="right:430.0px;top:462.15px;font-size:9px;color:#333">764.000</div>
<div class="t" style="left:1332px;top:462.15px;width:93.5px;overflow:hidden;font-size:9px;color:#333">Hóa đơn mới</div>
<div class="t" style="right:57.3px;top:461.55px;font-weight:bold;font-size:8.75px;color:#3a6cc0">Lập chứng từ bán hàng</div>
<div class="t" style="left:134.4px;width:200px;text-align:center;top:484.85px;font-size:9px;color:#333">01/01/2025</div>
<div class="t" style="left:298.8px;top:484.15px;font-size:8.85px;color:#3f72c2">00000010</div>
<div class="t" style="left:392.5px;top:484.85px;font-size:9px;color:#333">1</div>
<div class="t" style="left:506.2px;top:484.85px;font-size:9px;color:#333">1C25MBK</div>
<div class="t" style="left:587.0px;top:484.85px;font-size:9px;color:#333">Khách lẻ</div>
<div class="t" style="right:638.0px;top:484.85px;font-size:9px;color:#333">79.000</div>
<div class="t" style="right:543.7px;top:484.85px;font-size:9px;color:#333">0</div>
<div class="t" style="right:430.0px;top:484.85px;font-size:9px;color:#333">79.000</div>
<div class="t" style="left:1332px;top:484.85px;width:93.5px;overflow:hidden;font-size:9px;color:#333">Hóa đơn mới</div>
<div class="t" style="right:57.3px;top:484.25px;font-weight:bold;font-size:8.75px;color:#3a6cc0">Lập chứng từ bán hàng</div>
<svg style="left:0;top:0" width="1600" height="500"><path d="M1552.4 236.85H1557.8L1555.1 239.85Z" fill="#3a6cc0"/><path d="M1552.4 282.25H1557.8L1555.1 285.25Z" fill="#3a6cc0"/><path d="M1552.4 327.65H1557.8L1555.1 330.65Z" fill="#3a6cc0"/><path d="M1552.4 350.35H1557.8L1555.1 353.35Z" fill="#3a6cc0"/><path d="M1552.4 373.05H1557.8L1555.1 376.05Z" fill="#3a6cc0"/><path d="M1552.4 395.75H1557.8L1555.1 398.75Z" fill="#3a6cc0"/><path d="M1552.4 418.45H1557.8L1555.1 421.45Z" fill="#3a6cc0"/><path d="M1552.4 441.15H1557.8L1555.1 444.15Z" fill="#3a6cc0"/><path d="M1552.4 463.85H1557.8L1555.1 466.85Z" fill="#3a6cc0"/><path d="M1552.4 486.55H1557.8L1555.1 489.55Z" fill="#3a6cc0"/></svg>
<div class="a" style="left:1573.2px;top:207.4px;width:4.8px;height:292.6px;background:#f3f4f6"></div>
<div class="a" style="left:1573.2px;top:207.4px;width:4.8px;height:247px;border-radius:2.4px 2.4px 1px 1px;background:#ced1d5"></div>
<div class="a" style="left:1589.4px;top:484px;width:14px;height:20px;border-radius:3px 0 0 3px;background:#3b6ee6"></div>
<svg style="left:0;top:0" width="1600" height="500"><path d="M1596.6 492.4 L1593.8 495.2 L1596.6 498" stroke="#fff" stroke-width="1.2" fill="none"/></svg>
</body></html>
